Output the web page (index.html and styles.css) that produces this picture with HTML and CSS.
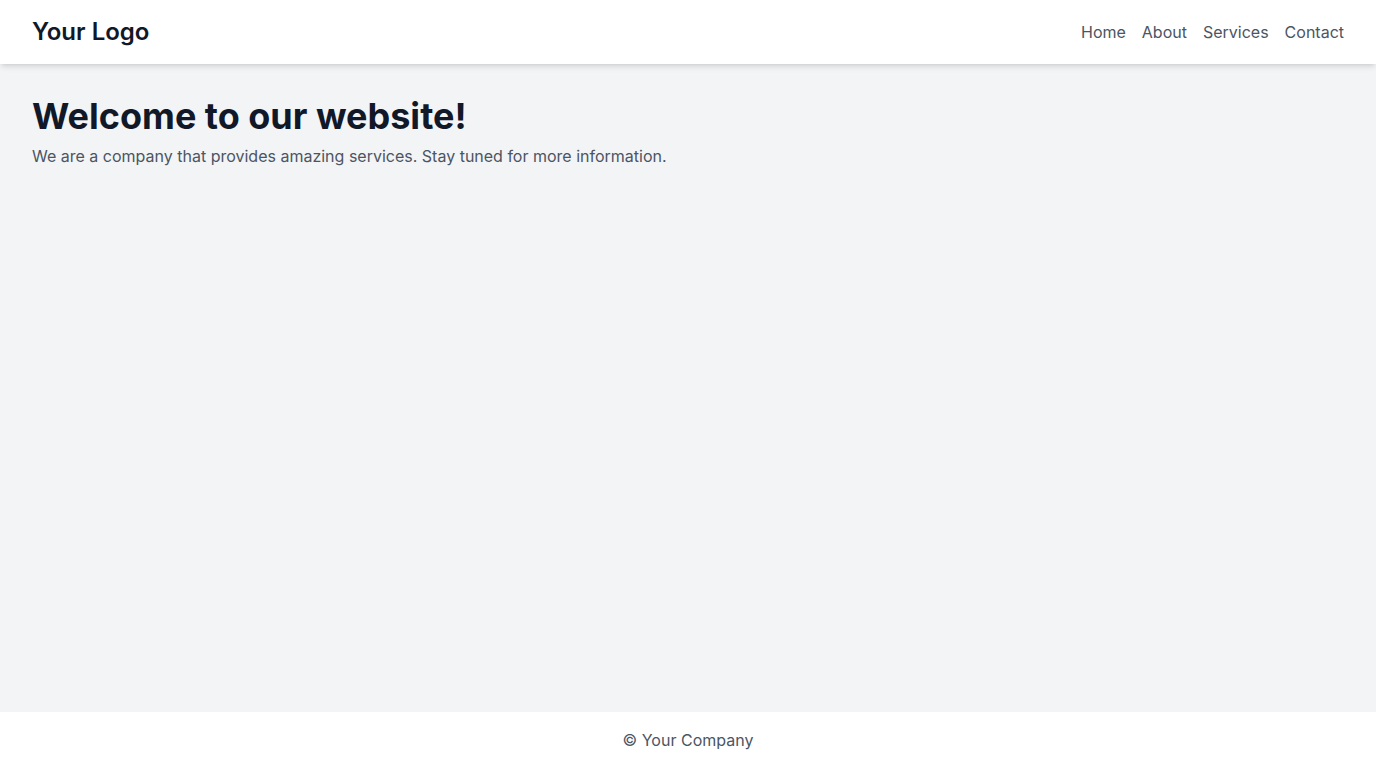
FILE: index.html
```html
<!DOCTYPE html>
<html lang="en">
<head>
<meta charset="utf-8">
<title>Your Logo</title>
<link rel="stylesheet" href="styles.css">
</head>
<body>
<div class="page">
  <header class="header">
    <div class="logo">Your Logo</div>
    <nav class="nav">
      <a href="#">Home</a>
      <a href="#">About</a>
      <a href="#">Services</a>
      <a href="#">Contact</a>
    </nav>
  </header>
  <main class="main">
    <h1 class="title">Welcome to our website!</h1>
    <p class="lead">We are a company that provides amazing services. Stay tuned for more information.</p>
  </main>
  <footer class="footer">© Your Company</footer>
</div>
</body>
</html>
```
FILE: styles.css
```css
* { box-sizing: border-box; }
html, body { margin: 0; padding: 0; }
body {
  font-family: Inter, "Noto Sans", sans-serif;
  background: #f3f4f6;
  color: #4b5563;
}
.page {
  min-height: 100vh;
  display: flex;
  flex-direction: column;
}
.header {
  background: #fff;
  height: 64px;
  padding: 0 32px;
  display: flex;
  align-items: center;
  justify-content: space-between;
  box-shadow: 0 4px 6px -1px rgba(0,0,0,0.1), 0 2px 4px -2px rgba(0,0,0,0.1);
  position: relative;
  z-index: 1;
}
.logo {
  font-size: 24px;
  line-height: 32px;
  font-weight: 600;
  color: #111827;
}
.nav {
  display: flex;
  gap: 16px;
}
.nav a {
  color: #4b5563;
  text-decoration: none;
  font-size: 16px;
  line-height: 24px;
}
.main {
  flex: 1;
  padding: 32px;
}
.title {
  margin: 0;
  font-size: 36px;
  line-height: 40px;
  font-weight: 700;
  color: #111827;
}
.lead {
  margin: 8px 0 0;
  font-size: 16px;
  line-height: 24px;
  color: #4b5563;
}
.footer {
  background: #fff;
  height: 56px;
  padding: 16px;
  text-align: center;
  font-size: 16px;
  line-height: 24px;
  color: #4b5563;
}
```
